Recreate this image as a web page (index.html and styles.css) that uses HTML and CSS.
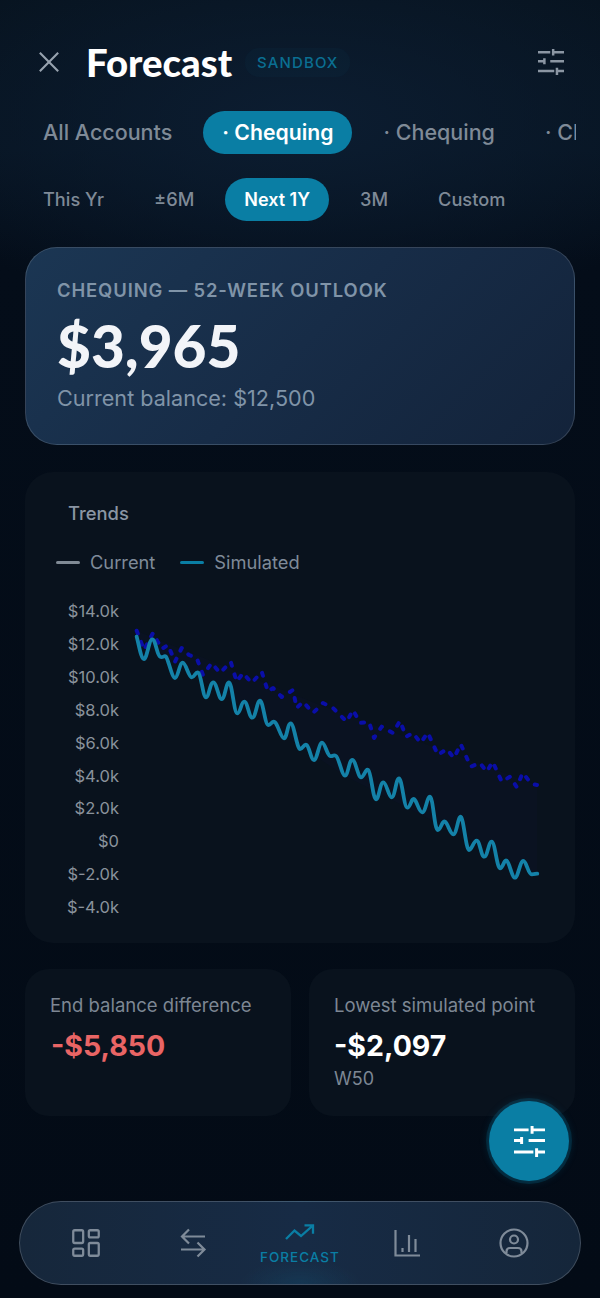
FILE: index.html
```html
<!DOCTYPE html>
<html lang="en">
<head>
  <meta charset="UTF-8">
  <title>Forecast</title>
  <link rel="stylesheet" href="styles.css">
</head>
<body>
  <div class="screen">

    <header class="top">
      <svg class="close-icon" viewBox="0 0 24 24"><path d="M2 2L22 22M22 2L2 22"/></svg>
      <h1 class="title">Forecast</h1>
      <span class="badge">SANDBOX</span>
      <svg class="filter-icon" viewBox="0 0 24 24"><path d="M0 3H11.3M14 0V6M14 3H24M0 11.3H5.9M5.9 8.6V14M11.3 11.3H24M0 20.2H15M17.5 17.3V24M17.5 20.2H24"/></svg>
    </header>

    <div class="tabs accounts">
      <span class="tab">All Accounts</span>
      <span class="tab active">· Chequing</span>
      <span class="tab">· Chequing</span>
      <span class="tab">· Chequing</span>
    </div>

    <div class="tabs ranges">
      <span class="tab">This Yr</span>
      <span class="tab">±6M</span>
      <span class="tab active">Next 1Y</span>
      <span class="tab">3M</span>
      <span class="tab">Custom</span>
    </div>

    <section class="hero">
      <div class="hero-label">CHEQUING — 52-WEEK OUTLOOK</div>
      <div class="hero-amount">$3,965</div>
      <div class="hero-sub">Current balance: $12,500</div>
    </section>

    <section class="chart-card">
      <div class="chart-title">Trends</div>
      <div class="legend">
        <span class="legend-item"><i class="swatch current"></i>Current</span>
        <span class="legend-item"><i class="swatch simulated"></i>Simulated</span>
      </div>
      <div class="plot">
        <div class="axis">
          <span>$14.0k</span>
          <span>$12.0k</span>
          <span>$10.0k</span>
          <span>$8.0k</span>
          <span>$6.0k</span>
          <span>$4.0k</span>
          <span>$2.0k</span>
          <span>$0</span>
          <span>$-2.0k</span>
          <span>$-4.0k</span>
        </div>
        <svg class="lines" viewBox="127 595 423 330">
          <path class="line-area" d="M137 631L320 705L537 785V874L345 776L137 637Z"/>
          <path class="line-current" d="M136.7 630.7L144 650L153 633L161.7 649L168 645L175 661.7L181.7 648L189 655L196.7 658L203 675L211.7 663L220 673L230.7 661.7L236.7 681.7L243 673L251.7 683L261.7 671.7L268 691.7L273 688L281.7 697L293 690L296.7 708L303 701.7L313 713L323 703L333 708L346.7 721.7L353 710L360 723L369 721.7L374 738L381.7 726.7L393 733L400 720.7L406 736.7L413 733L420.7 743L427.7 732.7L438 755L446.7 749L454 758L460.7 744L470.7 766.7L480 763L486.7 771.7L492.7 761.7L501.7 781.7L510 776.7L516.7 787L522.7 773L531.7 784L537 785"/>
          <path class="line-sim" d="M136.7 636.7C139 645 141 659 144 659S149 639 152.3 639.3S157 655 160 656.7S164 655 166 656.7S172 678 175 678S179.5 662.7 182.7 662.7S188.500 677.3 191.7 677.3S195.500 671 198.3 672.7S203 697.3 206 697.3S210 682.3 213.3 682.3S218.500 699 221.7 699S226 682.3 229 682.3S234 713.3 237.3 713.3S241 701.7 244.3 701.7S249 717.7 252.3 717.7S257 700.7 260 700.7S265 725 268.3 725S272 720 275 722.3S281 738.3 284 738.3S287.500 723.3 290.7 723.3S297 749 300 749S304 743 306.7 745S311 760 314 760S319 742.7 322 742.7S327 755 330 756S333 754 336 756S342 775.7 345 775.7S349 760 352.3 760S358 777.3 361 777.3S365.500 768 368.3 770S373 799.3 376 799.3S380 782.3 383.3 782.3S388.500 797.3 391.7 797.3S396 778.3 399 778.3S404 807.7 407.3 807.7S411.500 797 414.3 799.3S419 812.3 422.3 812.3S427 796.7 430 796.7S434.500 830 437.7 830S442 820 445 821.7S450 834.3 453.3 834.3S458 816.7 460.7 816.7S466 850 469 850S473.500 840.7 476.7 840.7S481 856.7 484.3 856.7S488.500 841.7 491.7 841.7S497 868.3 500 868.3S504 859 506.7 860.7S512 877.7 515 877.7S520 861 523.3 861S528 874.3 531.7 874.3S535 873.7 537.3 873.7"/>
        </svg>
      </div>
    </section>

    <section class="stats">
      <div class="stat">
        <div class="stat-label">End balance difference</div>
        <div class="stat-value negative">-$5,850</div>
      </div>
      <div class="stat">
        <div class="stat-label">Lowest simulated point</div>
        <div class="stat-value">-$2,097</div>
        <div class="stat-sub">W50</div>
      </div>
    </section>

    <button class="fab">
      <svg viewBox="0 0 24 24"><path d="M0 3H11.3M14 0V6M14 3H24M0 11.3H5.9M5.9 8.6V14M11.3 11.3H24M0 20.2H15M17.5 17.3V24M17.5 20.2H24"/></svg>
    </button>

    <nav class="bottom-nav">
      <div class="nav-item">
        <svg class="nav-icon" viewBox="0 0 24 24"><rect x="3" y="3" width="7" height="9" rx="1"/><rect x="14" y="3" width="7" height="5" rx="1"/><rect x="14" y="12" width="7" height="9" rx="1"/><rect x="3" y="16" width="7" height="5" rx="1"/></svg>
      </div>
      <div class="nav-item">
        <svg class="nav-icon" viewBox="0 0 34 34"><path d="M29 10.500H6M13 3.500L6 10.500L13 17.500M5 23.500H28.500M21.500 16.500L28.500 23.500L21.500 30.500"/></svg>
      </div>
      <div class="nav-item active">
        <svg class="nav-trend" viewBox="0 0 30 16"><path d="M1 15L9.500 6.500L16 12L28 1.300M19.500 1.300H28V9.700"/></svg>
        <span class="nav-label">FORECAST</span>
      </div>
      <div class="nav-item">
        <svg class="nav-icon" viewBox="0 0 34 34"><path d="M5.500 4V29.500H30M12.500 22V26M19 9V26M25.500 13V26"/></svg>
      </div>
      <div class="nav-item">
        <svg class="nav-icon" viewBox="0 0 34 34"><circle cx="17" cy="17" r="13.500"/><circle cx="17" cy="13.500" r="4"/><path d="M9.500 27V25.500C9.500 23.500 11 22 13 22H21C23 22 24.500 23.500 24.500 25.500V27"/></svg>
      </div>
    </nav>

  </div>
</body>
</html>
```

FILE: styles.css
```css
* {
  box-sizing: border-box;
}
body {
  margin: 0;
  font-family: Inter, "Noto Sans", sans-serif;
  background-color: #030b16;
}
.screen {
  position: relative;
  width: 600px;
  height: 1298px;
  overflow: hidden;
  padding-top: 40px;
  background:
    radial-gradient(ellipse 440px 200px at 50% 120px, #0c1d31 0%, rgba(12, 29, 49, 0) 100%),
    linear-gradient(180deg, #07131f 0, #071422 150px, #040d19 260px, #030b16 100%);
}

/* header */
.top {
  display: flex;
  align-items: center;
  height: 44px;
  padding: 0 36px 0 38px;
}
.close-icon {
  width: 22px;
  height: 22px;
  fill: none;
  stroke: #97a2ae;
  stroke-width: 2.300;
}
.title {
  margin: 0 0 0 26px;
  font-family: Lato, sans-serif;
  font-size: 38.300px;
  font-weight: 900;
  line-height: 44px;
  color: #fff;
}
.badge {
  margin-left: 13px;
  padding: 5px 12px;
  border-radius: 14px;
  background: rgba(10, 126, 164, 0.05);
  font-size: 15px;
  font-weight: 500;
  letter-spacing: 1.100px;
  color: #0a6f92;
}
.filter-icon {
  width: 26px;
  height: 26px;
  margin-left: auto;
  fill: none;
  stroke: #8b96a3;
  stroke-width: 2.300;
}

/* tabs */
.tabs {
  display: flex;
  gap: 12px;
  margin-left: 24px;
  margin-right: 24px;
  overflow: hidden;
}
.tab {
  flex: none;
  display: flex;
  align-items: center;
  height: 43px;
  padding: 0 19px 1px;
  border-radius: 22px;
  font-weight: 500;
  color: #7f8a97;
}
.tab.active {
  background-color: #0a7ea4;
  color: #fff;
  font-weight: 600;
}
.accounts {
  margin-top: 27px;
  font-size: 21.500px;
}
.accounts .active {
  font-size: 21.200px;
}
.ranges {
  margin-top: 24px;
  font-size: 18.200px;
}
.ranges .active {
  font-size: 18px;
}

/* balance card */
.hero {
  height: 198px;
  margin: 26px 25px 0;
  padding: 29px 31px 0;
  border: 1.500px solid rgba(255, 255, 255, 0.14);
  border-radius: 32px;
  background: linear-gradient(135deg, #1b3653 0%, #172c47 50%, #13233a 100%);
}
.hero-label {
  font-size: 18.400px;
  line-height: 26px;
  font-weight: 600;
  letter-spacing: 0.9px;
  color: #8094a8;
}
.hero-amount {
  margin-top: 7px;
  font-family: Lato, sans-serif;
  font-size: 58.500px;
  line-height: 70px;
  font-weight: 900;
  color: #f2f4f8;
}
.hero-sub {
  margin-top: 4px;
  font-size: 21.600px;
  line-height: 28px;
  color: #8094a8;
}

/* chart card */
.chart-card {
  height: 471px;
  margin: 27px 25px 0;
  padding-top: 28px;
  border-radius: 28px;
  background-color: #09121d;
}
.chart-title {
  padding-left: 43px;
  font-size: 18.400px;
  line-height: 26px;
  font-weight: 500;
  color: #8a95a3;
}
.legend {
  display: flex;
  gap: 25px;
  margin-top: 23px;
  padding-left: 31px;
  font-size: 18.300px;
  line-height: 26px;
  color: #7f8b99;
}
.legend-item {
  display: flex;
  align-items: center;
  gap: 10px;
}
.swatch {
  width: 24px;
  height: 3px;
  border-radius: 2px;
}
.swatch.current {
  background-color: #808a95;
}
.swatch.simulated {
  background-color: #0a7ea4;
}
.plot {
  display: flex;
  gap: 8px;
  margin-top: 20px;
}
.axis {
  display: flex;
  flex-direction: column;
  width: 94px;
  font-size: 16.500px;
  line-height: 32.900px;
  text-align: right;
  color: #8a929c;
}
.lines {
  width: 423px;
  height: 330px;
  fill: none;
  stroke-linejoin: round;
}
.line-area {
  fill: rgba(40, 20, 120, 0.05);
  stroke: none;
}
.line-current {
  stroke: #0a0ea8;
  stroke-width: 4;
  stroke-dasharray: 3 9;
  stroke-linecap: round;
}
.line-sim {
  stroke: #1482a8;
  stroke-width: 3.800;
  stroke-linecap: round;
}

/* stats */
.stats {
  display: grid;
  grid-template-columns: 1fr 1fr;
  gap: 18px;
  margin: 26px 25px 0;
}
.stat {
  padding: 24px 25px 25px;
  border-radius: 24px;
  background-color: #09121d;
}
.stat-label {
  font-size: 18.500px;
  line-height: 24px;
  color: #7d8794;
}
.stat-value {
  margin-top: 11px;
  font-size: 28.500px;
  line-height: 36px;
  font-weight: 700;
  color: #fff;
}
.stat-value.negative {
  padding-left: 1px;
  color: #e96565;
}
.stat-sub {
  margin-top: 3px;
  font-size: 18px;
  line-height: 24px;
  color: #7d8794;
}

/* floating button */
.fab {
  position: absolute;
  left: 489px;
  top: 1101px;
  display: flex;
  align-items: center;
  justify-content: center;
  width: 80px;
  height: 80px;
  padding: 0;
  border: 0;
  border-radius: 50%;
  background-color: #0a7ea4;
  box-shadow: 0 0 0 3px rgba(10, 126, 164, 0.2), 0 0 10px rgba(10, 126, 164, 0.3);
}
.fab svg {
  width: 31px;
  height: 31px;
  fill: none;
  stroke: #fff;
  stroke-width: 2.300;
}

/* bottom nav */
.bottom-nav {
  position: absolute;
  left: 19px;
  top: 1201px;
  display: flex;
  width: 562px;
  height: 84px;
  padding: 0 13px;
  border: 1.500px solid rgba(255, 255, 255, 0.18);
  border-radius: 42px;
  background:
    radial-gradient(ellipse 60px 24px at 50% 100%, rgba(10, 126, 164, 0.14), rgba(10, 126, 164, 0)),
    linear-gradient(90deg, #16273b 0%, #172b45 50%, #15263a 100%);
}
.nav-item {
  flex: 1;
  display: flex;
  flex-direction: column;
  align-items: center;
  justify-content: center;
}
.nav-icon {
  width: 34px;
  height: 34px;
  fill: none;
  stroke: #7f8b99;
  stroke-width: 2.200;
}
.nav-icon rect {
  stroke-width: 1.600;
}
.nav-trend {
  width: 30px;
  height: 16px;
  margin-top: 4px;
  fill: none;
  stroke: #0a7ea4;
  stroke-width: 2.300;
}
.nav-label {
  margin-top: 8px;
  font-size: 13.500px;
  line-height: 18px;
  font-weight: 500;
  letter-spacing: 1px;
  color: #0a7ea4;
}
```
